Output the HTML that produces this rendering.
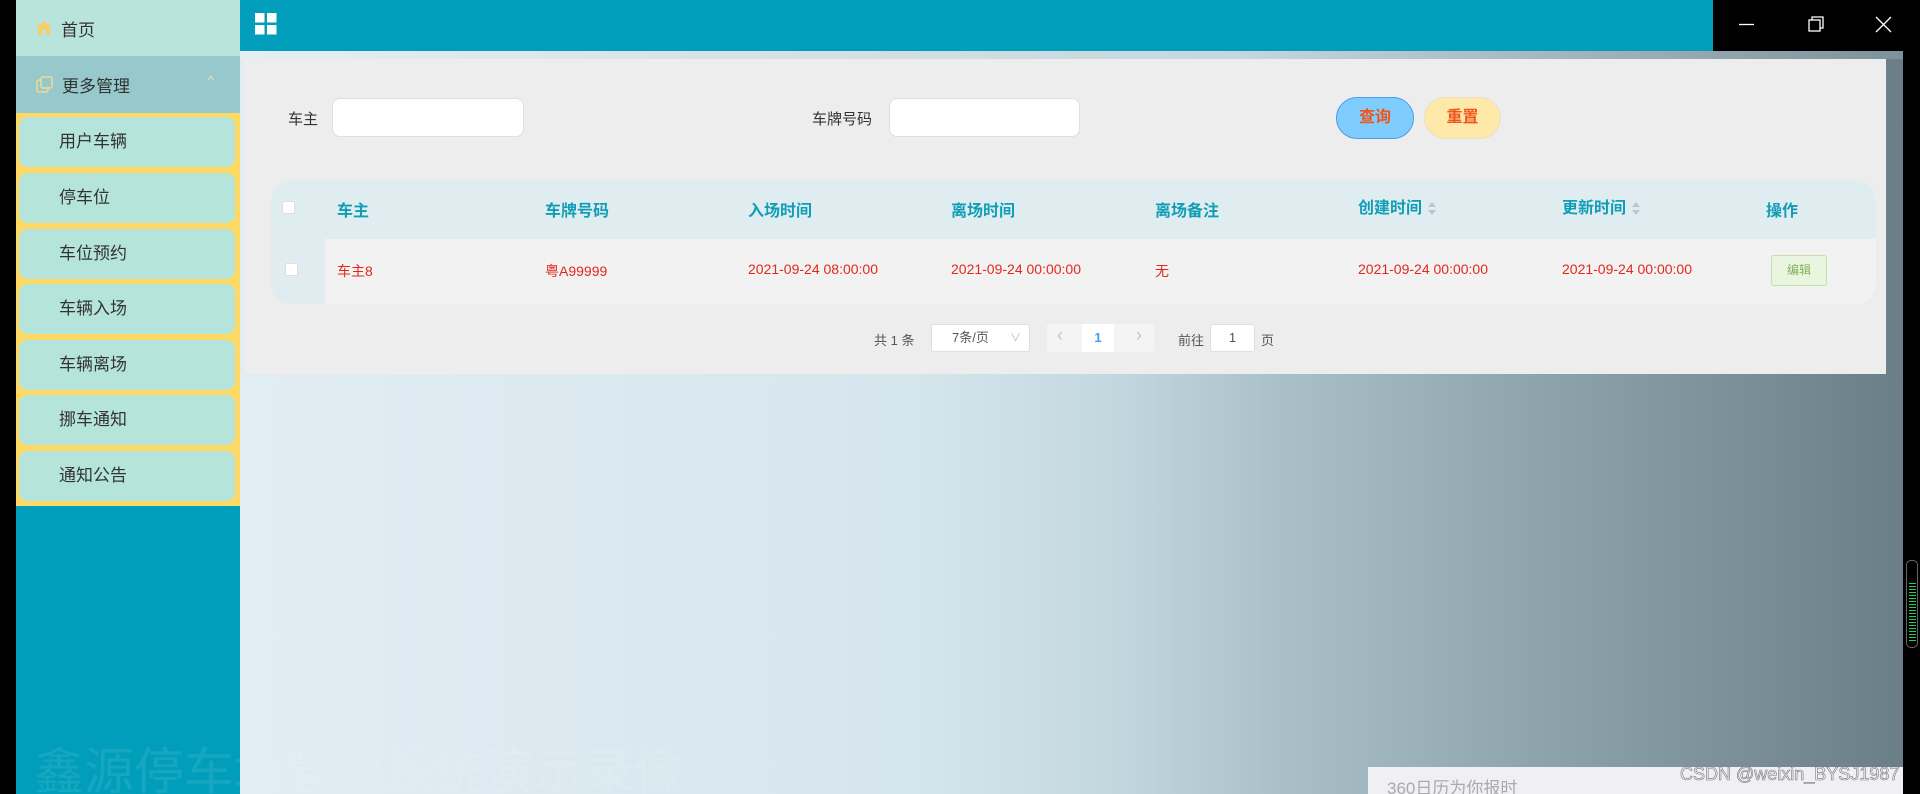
<!DOCTYPE html>
<html style="width:1920px;height:794px;overflow:hidden"><head><meta charset="utf-8"><style>
*{margin:0;padding:0;box-sizing:border-box}
body{width:1920px;height:794px;overflow:hidden;position:relative;background:#000;font-family:"Liberation Sans","Noto Sans CJK SC",sans-serif;font-size:14px}
.abs{position:absolute}
#side{left:16px;top:0;width:224px;height:794px;background:#009eba;overflow:hidden}
#main{left:240px;top:51px;width:1663px;height:743px;background:linear-gradient(to right,#e1edf3 0%,#d6e6ed 40%,#c4d8e0 52%,#a9bfc8 63%,#8ea4ad 78%,#6a7e88 100%)}
.menu{position:absolute;left:0;width:224px;color:#333;font-size:17px;display:flex;align-items:center}
.sub{position:absolute;left:3px;width:216px;height:50px;background:#b5e4da;border-radius:9px;color:#333;font-size:17px;line-height:50px;padding-left:40px}
.th{position:absolute;top:197px;color:#119db5;font-weight:bold;font-size:16px}
.td{position:absolute;top:261px;color:#e2281c;font-size:14px}
.cb{position:absolute;width:13px;height:13px;background:#fff;border:1px solid #dcdfe6;border-radius:2px}
.sort{display:inline-block;vertical-align:middle;margin-left:6px;width:8px;height:14px;position:relative}
.sort:before{content:"";position:absolute;left:0;top:0;border:4px solid transparent;border-bottom:5px solid #c0c4cc;border-top:0}
.sort:after{content:"";position:absolute;left:0;top:8px;border:4px solid transparent;border-top:5px solid #c0c4cc;border-bottom:0}
</style></head><body>
<div id="side" class="abs">
 <div class="menu" style="top:0;height:56px;background:#b9e4dc">
  <svg style="margin-left:20px" width="16" height="14" viewBox="0 0 16 14"><path d="M8 0L0 7h2v7h4V9h4v5h4V7h2z" fill="#f6cf6a"/></svg>
  <span style="margin-left:9px">首页</span></div>
 <div class="menu" style="top:56px;height:57px;background:#96c8cc">
  <svg style="margin-left:20px" width="17" height="17" viewBox="0 0 17 17"><rect x="1" y="4" width="11" height="12" rx="2" fill="none" stroke="#f0dc90" stroke-width="1.5"/><rect x="5" y="1" width="11" height="11" rx="2" fill="#96c8cc" stroke="#f0dc90" stroke-width="1.5"/></svg>
  <span style="margin-left:9px">更多管理</span>
  <span style="position:absolute;left:192px;top:17px;color:#e8eec0;font-size:12px">^</span></div>
 <div class="abs" style="left:0;top:113px;width:224px;height:393px;background:#ffd966">
  <div class="sub" style="top:4px">用户车辆</div>
  <div class="sub" style="top:60px">停车位</div>
  <div class="sub" style="top:116px">车位预约</div>
  <div class="sub" style="top:171px">车辆入场</div>
  <div class="sub" style="top:227px">车辆离场</div>
  <div class="sub" style="top:282px">挪车通知</div>
  <div class="sub" style="top:338px">通知公告</div>
 </div>
</div>
<div class="abs" style="left:240px;top:0;width:1473px;height:51px;background:#009eba">
 <svg style="position:absolute;left:15px;top:13px" width="22" height="22" viewBox="0 0 22 22" fill="#fff"><rect x="0" y="0" width="9.5" height="9.5"/><rect x="12" y="0" width="9.5" height="9.5"/><rect x="0" y="12" width="9.5" height="9.5"/><rect x="12" y="12" width="9.5" height="9.5"/></svg>
</div>
<div class="abs" style="left:1713px;top:0;width:207px;height:48px;background:#000">
 <svg width="207" height="48"><path d="M26 24.5h15" stroke="#fff" stroke-width="1.3"/><rect x="96" y="20" width="11" height="11" fill="none" stroke="#fff" stroke-width="1.3"/><path d="M99 20v-3h11v11h-3" fill="none" stroke="#fff" stroke-width="1.3"/><path d="M163 17l15 15M178 17l-15 15" stroke="#fff" stroke-width="1.3"/></svg>
</div>
<div id="main" class="abs"></div>
<div class="abs" style="left:240px;top:51px;width:1663px;height:8px;background:linear-gradient(to right,#e6eef2,#c7d6dd 60%,#7e929b)"></div>
<div class="abs" style="left:244px;top:59px;width:1642px;height:315px;background:#ededed"></div>
<div class="abs" style="left:288px;top:108px;color:#333;font-size:15px">车主</div>
<div class="abs" style="left:332px;top:98px;width:192px;height:39px;background:#fff;border:1px solid #dcdfe6;border-radius:8px"></div>
<div class="abs" style="left:812px;top:108px;color:#333;font-size:15px">车牌号码</div>
<div class="abs" style="left:889px;top:98px;width:191px;height:39px;background:#fff;border:1px solid #dcdfe6;border-radius:8px"></div>
<div class="abs" style="left:1336px;top:97px;width:78px;height:42px;background:#7fcdff;border:1px solid #4a9de8;border-radius:21px;color:#f0541e;font-size:16px;font-weight:bold;text-align:center;line-height:40px">查询</div>
<div class="abs" style="left:1424px;top:97px;width:77px;height:42px;background:#ffe9a8;border:1px solid #e8e0c8;border-radius:21px;color:#f0541e;font-size:16px;font-weight:bold;text-align:center;line-height:40px">重置</div>
<div class="abs" style="left:271px;top:180px;width:1605px;height:124px;border-radius:20px;overflow:hidden;background:#f2f2f2">
 <div class="abs" style="left:0;top:0;width:1605px;height:59px;background:#dfedf1"></div>
 <div class="abs" style="left:0;top:59px;width:54px;height:65px;background:#e0ecf0"></div>
</div>
<div class="cb" style="left:282px;top:201px"></div>
<div class="cb" style="left:285px;top:263px"></div>
<div class="th" style="left:337px">车主</div>
<div class="th" style="left:545px">车牌号码</div>
<div class="th" style="left:748px">入场时间</div>
<div class="th" style="left:951px">离场时间</div>
<div class="th" style="left:1155px">离场备注</div>
<div class="th" style="left:1358px;top:194px">创建时间<span class="sort"></span></div>
<div class="th" style="left:1562px;top:194px">更新时间<span class="sort"></span></div>
<div class="th" style="left:1766px">操作</div>
<div class="td" style="left:337px">车主8</div>
<div class="td" style="left:545px">粤A99999</div>
<div class="td" style="left:748px">2021-09-24 08:00:00</div>
<div class="td" style="left:951px">2021-09-24 00:00:00</div>
<div class="td" style="left:1155px">无</div>
<div class="td" style="left:1358px">2021-09-24 00:00:00</div>
<div class="td" style="left:1562px">2021-09-24 00:00:00</div>
<div class="abs" style="left:1771px;top:255px;width:56px;height:31px;background:#eaf5e0;border:1px solid #c2e0a8;border-radius:3px;color:#7fb25a;font-size:12px;text-align:center;line-height:29px">编辑</div>
<div class="abs" style="left:874px;top:330px;color:#555;font-size:13px">共 1 条</div>
<div class="abs" style="left:931px;top:324px;width:99px;height:28px;background:#fff;border:1px solid #dcdfe6;border-radius:3px;color:#555;font-size:13px;line-height:26px;padding-left:20px">7条/页<span style="position:absolute;right:8px;color:#bbb;font-size:11px">∨</span></div>
<div class="abs" style="left:1047px;top:324px;width:107px;height:28px;background:#f4f4f5;border-radius:3px"></div>
<div class="abs" style="left:1057px;top:325px;color:#c0c4cc;font-size:18px">‹</div>
<div class="abs" style="left:1082px;top:324px;width:32px;height:28px;background:#fff;color:#409eff;font-weight:bold;font-size:13px;text-align:center;line-height:28px">1</div>
<div class="abs" style="left:1136px;top:325px;color:#c0c4cc;font-size:18px">›</div>
<div class="abs" style="left:1178px;top:330px;color:#555;font-size:13px">前往</div>
<div class="abs" style="left:1210px;top:324px;width:45px;height:28px;background:#fff;border:1px solid #dcdfe6;border-radius:3px;color:#555;text-align:center;line-height:26px;font-size:13px">1</div>
<div class="abs" style="left:1261px;top:330px;color:#555;font-size:13px">页</div>
<div class="abs" style="left:34px;top:742px;height:52px;overflow:hidden;line-height:60px;color:rgba(255,255,255,0.09);font-size:50px;white-space:nowrap">鑫源停车场管理系统演示录像</div>
<div class="abs" style="left:1368px;top:767px;width:535px;height:27px;background:#f0f0f4"></div>
<div class="abs" style="left:1387px;top:778px;height:16px;overflow:hidden;line-height:22px;color:#aaa;font-size:17px">360日历为你报时</div>
<div class="abs" style="left:1680px;top:763px;line-height:22px;color:#f4f4f4;font-size:18px;-webkit-text-stroke:0.6px #777">CSDN @weixin_BYSJ1987</div>
<div class="abs" style="left:1906px;top:560px;width:12px;height:88px;border:1.5px solid #666;border-radius:5px;background:repeating-linear-gradient(#000 0 2px,#1fd15a 2px 3px) 2px 20px/7px 62px no-repeat"></div>
</body></html>
